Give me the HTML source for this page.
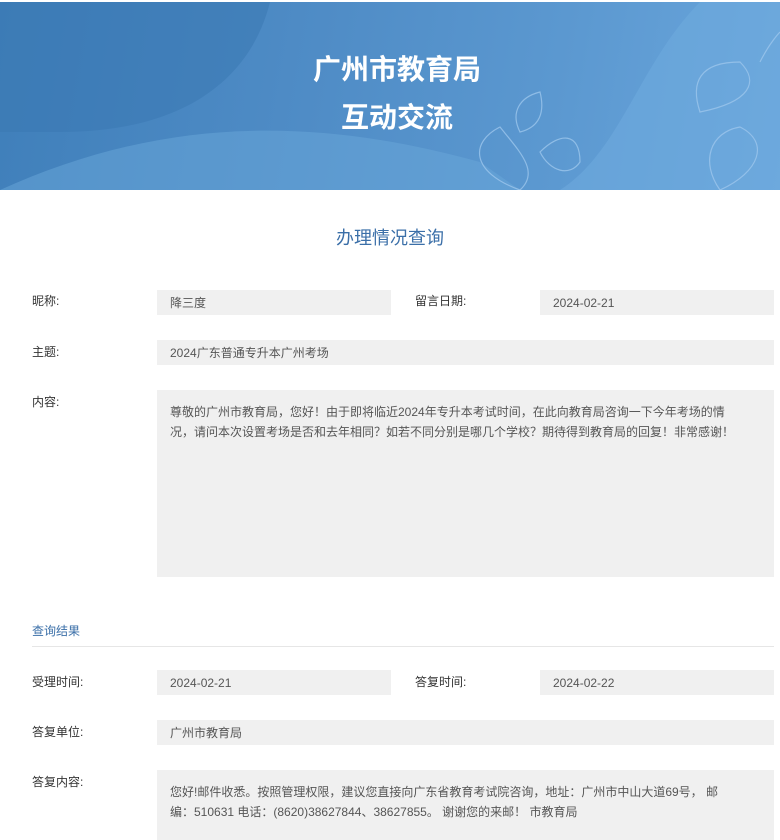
<!DOCTYPE html>
<html><head><meta charset="utf-8"><style>
body{margin:0;width:780px;height:831px;overflow:hidden;background:#fff;font-family:"Liberation Sans","Noto Sans CJK SC",sans-serif;color:#333;position:relative}
.banner{position:absolute;left:0;top:2px;width:780px;height:188px;background:linear-gradient(100deg,#3f7fba 0%,#4f8cc6 40%,#5b98d0 70%,#6aa6dc 100%);overflow:hidden}
.banner h1{position:absolute;left:14px;right:0;text-align:center;margin:0;color:#fff;font-weight:bold;font-size:28px;letter-spacing:0px}
.title{position:absolute;left:0;right:0;top:224px;text-align:center;font-size:18px;color:#3b6fa8}
.lbl{position:absolute;font-size:12px;color:#333}
.box{position:absolute;background:#f0f0f0;font-size:12px;color:#555;padding-left:13px;box-sizing:border-box;line-height:26px;height:25px}
.ta{position:absolute;background:#f0f0f0;font-size:12px;color:#555;padding:12px 30px 12px 13px;box-sizing:border-box;line-height:20px}
</style></head><body>
<div class="banner">
<svg width="780" height="188" style="position:absolute;left:0;top:0">
<path d="M0 0 H270 C250 80 180 130 60 130 H0Z" fill="#3a78b3" opacity=".55"/>
<path d="M0 188 C150 120 300 110 480 160 L520 188Z" fill="#6aa7da" opacity=".5"/>
<path d="M700 0 C640 60 620 150 560 188 H780 V0Z" fill="#70abdf" opacity=".55"/>
<g fill="none" stroke="#9cc6ec" stroke-width="1.2" opacity=".8">
<path d="M520 188 C470 170 470 140 500 125 C520 150 540 170 520 188Z"/>
<path d="M520 130 C510 110 520 95 540 90 C545 110 540 125 520 130Z"/>
<path d="M540 150 C560 130 580 130 580 160 C570 175 550 170 540 150Z"/>
<path d="M700 110 C690 80 700 60 740 60 C760 80 750 100 700 110Z"/>
<path d="M720 188 C700 160 710 130 740 125 C770 140 760 170 720 188Z"/>
<path d="M760 60 C770 40 780 30 780 30"/>
</g>
</svg>
<h1 style="top:46px">广州市教育局</h1>
<h1 style="top:94px">互动交流</h1>
</div>
<div class="title">办理情况查询</div>

<div class="lbl" style="left:32px;top:292px">昵称:</div>
<div class="box" style="left:157px;top:290px;width:234px">降三度</div>
<div class="lbl" style="left:415px;top:292px">留言日期:</div>
<div class="box" style="left:540px;top:290px;width:234px">2024-02-21</div>

<div class="lbl" style="left:32px;top:343px">主题:</div>
<div class="box" style="left:157px;top:340px;width:617px">2024广东普通专升本广州考场</div>

<div class="lbl" style="left:32px;top:393px">内容:</div>
<div class="ta" style="left:157px;top:390px;width:617px;height:187px">尊敬的广州市教育局，您好！由于即将临近2024年专升本考试时间，在此向教育局咨询一下今年考场的情况，请问本次设置考场是否和去年相同？如若不同分别是哪几个学校？期待得到教育局的回复！非常感谢！</div>

<div class="lbl" style="left:32px;top:622px;color:#3b6fa8">查询结果</div>
<div style="position:absolute;left:32px;top:646px;width:742px;height:1px;background:#e6e6e6"></div>

<div class="lbl" style="left:32px;top:673px">受理时间:</div>
<div class="box" style="left:157px;top:670px;width:234px">2024-02-21</div>
<div class="lbl" style="left:415px;top:673px">答复时间:</div>
<div class="box" style="left:540px;top:670px;width:234px">2024-02-22</div>

<div class="lbl" style="left:32px;top:723px">答复单位:</div>
<div class="box" style="left:157px;top:720px;width:617px">广州市教育局</div>

<div class="lbl" style="left:32px;top:773px">答复内容:</div>
<div class="ta" style="left:157px;top:770px;width:617px;height:70px;padding-right:40px">您好!邮件收悉。按照管理权限，建议您直接向广东省教育考试院咨询，地址：广州市中山大道69号， 邮编：510631 电话：(8620)38627844、38627855。 谢谢您的来邮！ 市教育局</div>
</body></html>
